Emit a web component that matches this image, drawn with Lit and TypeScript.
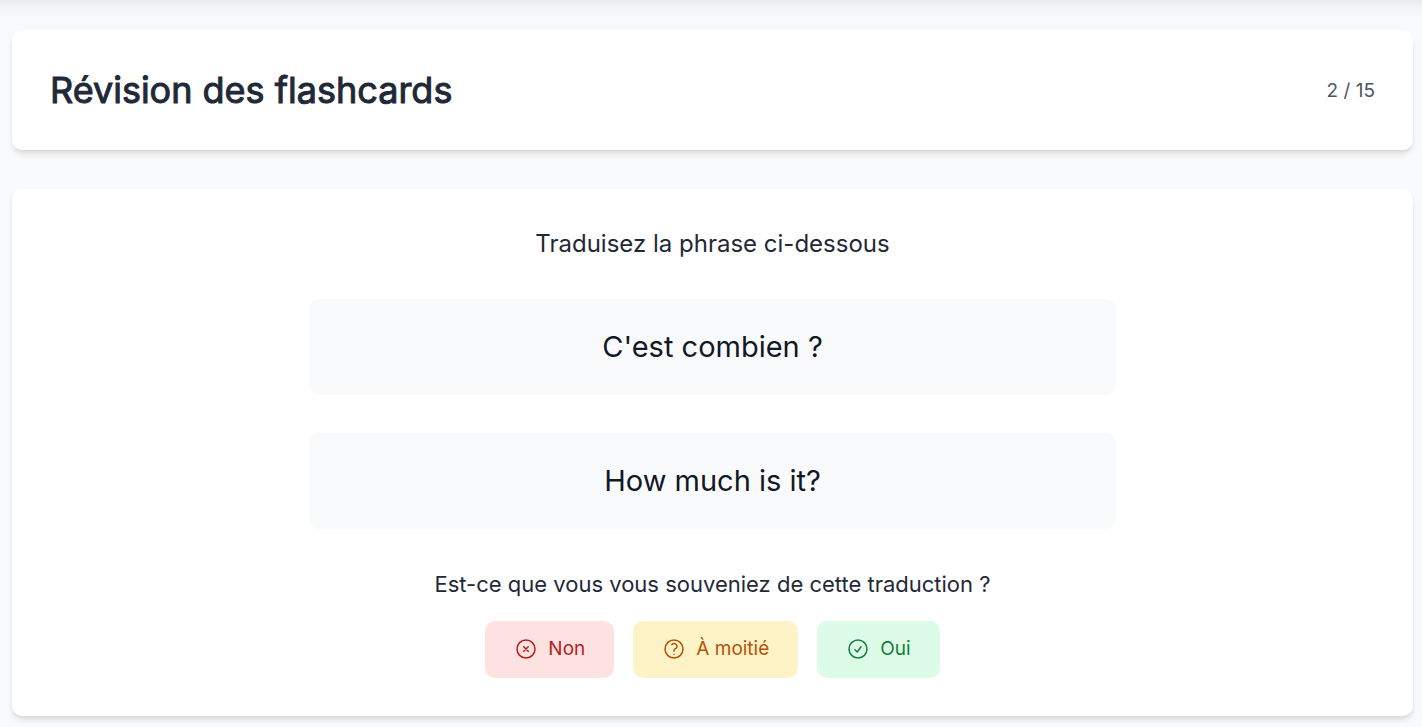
import { LitElement, html, css, svg } from "lit";
import { customElement } from "lit/decorators.js";

const icon = (mark: unknown) => html`<svg class="icon" viewBox="0 0 24 24" aria-hidden="true">
  <circle cx="12" cy="12" r="9"></circle>${mark}
</svg>`;

const cross = svg`<path d="M9.75 9.75l4.5 4.5M14.25 9.75l-4.5 4.5"></path>`;
const question = svg`<path d="M9.879 7.519c1.171-1.025 3.071-1.025 4.242 0 1.172 1.025 1.172 2.687 0 3.712-.203.179-.43.326-.67.442-.745.361-1.45.999-1.45 1.827v.75M12 17.25h.008v.008H12v-.008Z"></path>`;
const check = svg`<path d="M9 12.75 11.25 15 15 9.75"></path>`;

@customElement("app-root")
export class AppRoot extends LitElement {
  static styles = css`
    :host {
      display: block;
      min-height: 100vh;
      box-sizing: border-box;
      padding: 30px 9px 11px 12px;
      background: linear-gradient(#e9ebec, #f3f4f5 8px, #f9fafb 18px);
      color: #1f2937;
      font-family: Inter, sans-serif;
    }
    main {
      display: flex;
      flex-direction: column;
      gap: 39px;
    }
    .card {
      background: #fff;
      border-radius: 10px;
      box-shadow: 0 5px 7px -1px rgb(0 0 0 / 0.1), 0 2px 5px -2px rgb(0 0 0 / 0.1);
    }
    .head {
      display: flex;
      align-items: center;
      justify-content: space-between;
      padding: 38px;
    }
    h1, h2, p { margin: 0; }
    h1 {
      font-size: 36px;
      line-height: 44px;
      font-weight: 400;
      -webkit-text-stroke: 1px currentColor;
    }
    .count {
      font-size: 19px;
      line-height: 29px;
      color: #4b5563;
    }
    .body {
      display: flex;
      flex-direction: column;
      align-items: center;
      padding: 38px;
    }
    h2 {
      font-size: 24px;
      line-height: 34px;
      font-weight: 400;
    }
    .phrases {
      display: flex;
      flex-direction: column;
      gap: 38px;
      width: 100%;
      max-width: 807px;
      margin: 38px 0;
    }
    .phrase {
      padding: 29px;
      border-radius: 10px;
      background: #f9fafb;
      color: #111827;
      font-size: 29px;
      line-height: 38px;
      text-align: center;
    }
    .ask {
      font-size: 22px;
      line-height: 34px;
    }
    .answers {
      display: flex;
      gap: 19px;
      margin-top: 20px;
    }
    button {
      display: flex;
      align-items: center;
      gap: 10px;
      padding: 14px 29px 15px;
      border: 0;
      border-radius: 10px;
      font: 400 19px/28px Inter, sans-serif;
      cursor: pointer;
    }
    .no { background: #fee2e2; color: #b91c1c; }
    .half { background: #fef3c7; color: #b45309; }
    .yes { background: #dcfce7; color: #15803d; }
    .icon {
      width: 24px;
      height: 24px;
      fill: none;
      stroke: currentColor;
      stroke-width: 1.5;
      stroke-linecap: round;
      stroke-linejoin: round;
    }
  `;

  render() {
    return html`<main>
      <header class="card head">
        <h1>Révision des flashcards</h1>
        <span class="count">2 / 15</span>
      </header>
      <section class="card body">
        <h2>Traduisez la phrase ci-dessous</h2>
        <div class="phrases">
          <p class="phrase">C'est combien ?</p>
          <p class="phrase">How much is it?</p>
        </div>
        <p class="ask">Est-ce que vous vous souveniez de cette traduction ?</p>
        <div class="answers">
          <button class="no" type="button">${icon(cross)}Non</button>
          <button class="half" type="button">${icon(question)}À moitié</button>
          <button class="yes" type="button">${icon(check)}Oui</button>
        </div>
      </section>
    </main>`;
  }
}
